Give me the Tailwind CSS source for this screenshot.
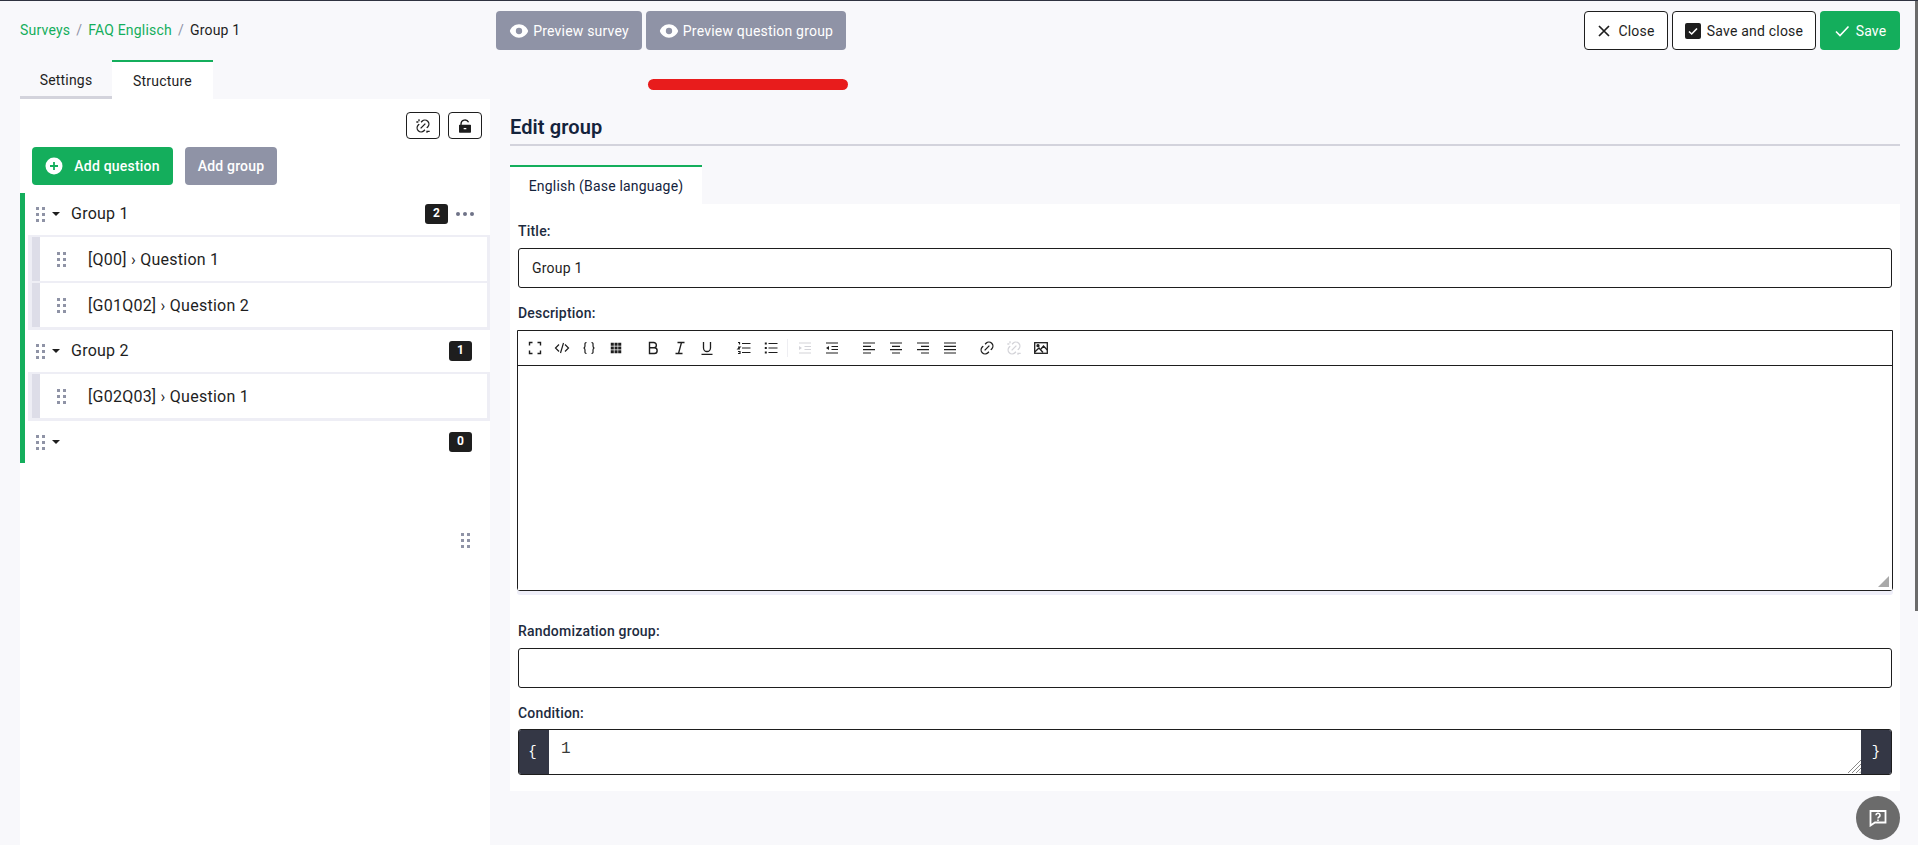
<!DOCTYPE html>
<html lang="en">
<head>
    <meta charset="UTF-8">
    <meta name="viewport" content="width=device-width, initial-scale=1.0">
    <title>Edit group</title>
    <script src="https://cdn.jsdelivr.net/npm/@tailwindcss/browser@4"></script>
</head>
<body class="bg-[#f8f8fb] text-[#1e1e1e] font-['Roboto',sans-serif] text-sm tracking-[0.2px]">
<div class="relative h-[845px] w-[1918px] overflow-hidden border-t border-[#2f3341]">

    <!-- top bar -->
    <header class="flex h-[59px] items-start pl-5 pr-[18px] pt-[10px]">
        <nav class="flex h-[38px] w-[476px] items-center gap-[6px]">
            <a class="text-[#14ae5c]">Surveys</a><span class="text-[#8f93a6]">/</span>
            <a class="text-[#14ae5c]">FAQ Englisch</a><span class="text-[#8f93a6]">/</span>
            <span>Group 1</span>
        </nav>
        <div class="flex gap-1">
            <button class="flex h-[39px] w-[146px] items-center justify-center gap-1 rounded bg-[#8f93a6] text-white">
                <svg class="h-5 w-5" viewBox="0 0 24 24" fill="#fff"><path fill-rule="evenodd" d="M12 4c5 0 9.400 3.400 11 8-1.600 4.600-6 8-11 8s-9.400-3.400-11-8c1.600-4.600 6-8 11-8zm0 4.200a3.800 3.800 0 1 0 0 7.600 3.800 3.800 0 0 0 0-7.600z"/></svg>
                Preview survey
            </button>
            <button class="flex h-[39px] w-[200px] items-center justify-center gap-1 rounded bg-[#8f93a6] text-white">
                <svg class="h-5 w-5" viewBox="0 0 24 24" fill="#fff"><path fill-rule="evenodd" d="M12 4c5 0 9.400 3.400 11 8-1.600 4.600-6 8-11 8s-9.400-3.400-11-8c1.600-4.600 6-8 11-8zm0 4.200a3.800 3.800 0 1 0 0 7.600 3.800 3.800 0 0 0 0-7.600z"/></svg>
                Preview question group
            </button>
        </div>
        <div class="ml-auto flex gap-1">
            <button class="flex h-[39px] w-[84px] items-center justify-center gap-[7px] rounded border border-[#1e1e1e] bg-white">
                <svg class="h-[14px] w-[14px]" viewBox="0 0 14 14" fill="none" stroke="#1e1e1e" stroke-width="1.700"><path d="M2 2l10 10M12 2L2 12"/></svg>
                Close
            </button>
            <button class="flex h-[39px] w-[144px] items-center justify-center gap-[6px] rounded border border-[#1e1e1e] bg-white">
                <span class="flex h-4 w-4 items-center justify-center rounded-[2px] bg-[#1e1e1e]">
                    <svg class="h-3 w-3" viewBox="0 0 12 12" fill="none" stroke="#fff" stroke-width="1.600"><path d="M2 6.500l2.700 2.500L10 3.500"/></svg>
                </span>
                Save and close
            </button>
            <button class="flex h-[39px] w-20 items-center justify-center gap-[6px] rounded bg-[#14ae5c] text-white">
                <svg class="h-[14px] w-[16px]" viewBox="0 0 16 14" fill="none" stroke="#fff" stroke-width="1.600"><path d="M2 7.500l4 4L14.500 2.500"/></svg>
                Save
            </button>
        </div>
    </header>

    <div class="flex gap-5 pl-5">
        <!-- left: structure -->
        <aside class="w-[470px]">
            <div class="flex h-[39px]">
                <div class="flex h-[39px] w-[92px] items-center justify-center border-b-[3px] border-[#d3d3dc] pt-1">Settings</div>
                <div class="flex h-[39px] w-[101px] items-center justify-center border-t-2 border-[#14ae5c] bg-white">Structure</div>
            </div>
            <div class="h-[747px] bg-white">
                <div class="flex justify-end gap-2 pt-[13px] pr-2">
                    <button class="flex h-[27px] w-[34px] items-center justify-center rounded border border-[#1e1e1e]">
                        <svg class="h-4 w-4" viewBox="0 0 24 24" fill="#1e1e1e"><path d="M18.364 15.536l-1.414-1.415 1.414-1.414a5 5 0 1 0-7.071-7.071L9.878 7.050 8.464 5.636l1.414-1.414a7 7 0 0 1 9.900 9.899l-1.414 1.415zm-2.829 2.828l-1.414 1.414a7 7 0 0 1-9.899-9.899l1.414-1.414 1.414 1.414-1.414 1.414a5 5 0 0 0 7.071 7.071l1.414-1.414 1.414 1.414zM14.828 7.757l1.414 1.414-7.071 7.071-1.414-1.414 7.071-7.071zM5 2h2v3H5zM2 5h3v2H2zM19 19h3v2h-3zM17 19h2v3h-2z"/></svg>
                    </button>
                    <button class="flex h-[27px] w-[34px] items-center justify-center rounded border border-[#1e1e1e]">
                        <svg class="h-4 w-4" viewBox="0 0 24 24" fill="#1e1e1e"><path fill-rule="evenodd" d="M7 10h13a1 1 0 0 1 1 1v10a1 1 0 0 1-1 1H4a1 1 0 0 1-1-1V11a1 1 0 0 1 1-1h1V9a7 7 0 0 1 13.262-3.131l-1.789.895A5 5 0 0 0 7 9v1zm3 5v2h4v-2h-4z"/></svg>
                    </button>
                </div>
                <div class="flex gap-3 pl-3 pt-2">
                    <button class="flex h-[38px] w-[141px] items-center justify-center gap-[11px] rounded bg-[#14ae5c] font-medium text-white">
                        <svg class="h-[18px] w-[18px]" viewBox="0 0 18 18"><circle cx="9" cy="9" r="8.500" fill="#fff"/><path d="M9 5v8M5 9h8" stroke="#14ae5c" stroke-width="1.800"/></svg>
                        Add question
                    </button>
                    <button class="h-[38px] w-[92px] rounded bg-[#8f93a6] font-medium text-white">Add group</button>
                </div>

                <!-- tree -->
                <div class="mt-2 border-l-[5px] border-[#14ae5c] text-[16px] tracking-[0.25px]">
                    <div class="flex h-[42px] items-center">
                        <svg class="ml-[11px] h-[15px] w-[10px]" viewBox="0 0 10 15" fill="#8f93a6"><rect width="3" height="3" x="0" y="0"/><rect width="3" height="3" x="6" y="0"/><rect width="3" height="3" x="0" y="6"/><rect width="3" height="3" x="6" y="6"/><rect width="3" height="3" x="0" y="12"/><rect width="3" height="3" x="6" y="12"/></svg>
                        <span class="ml-[6px] h-0 w-0 border-x-4 border-t-4 border-x-transparent border-t-[#1e1e1e]"></span>
                        <span class="ml-[11px]">Group 1</span>
                        <span class="ml-auto flex h-5 w-[23px] items-center justify-center rounded-[3px] bg-[#1e1e1e] text-[12px] font-bold text-white">2</span>
                        <svg class="ml-2 mr-4 h-1 w-[18px]" viewBox="0 0 18 4" fill="#6f7388"><circle cx="2" cy="2" r="2"/><circle cx="9" cy="2" r="2"/><circle cx="16" cy="2" r="2"/></svg>
                    </div>
                    <div class="ml-[3px] flex flex-col gap-[2px] bg-[#eeeef5] pb-[3px] pl-1 pr-[3px] pt-[2px]">
                        <div class="flex h-11 items-center border-l-8 border-[#dddde8] bg-white">
                            <svg class="ml-[17px] h-[15px] w-[10px]" viewBox="0 0 10 15" fill="#8f93a6"><rect width="3" height="3" x="0" y="0"/><rect width="3" height="3" x="6" y="0"/><rect width="3" height="3" x="0" y="6"/><rect width="3" height="3" x="6" y="6"/><rect width="3" height="3" x="0" y="12"/><rect width="3" height="3" x="6" y="12"/></svg>
                            <span class="ml-[21px] pt-[2px]">[Q00] › Question 1</span>
                        </div>
                        <div class="flex h-11 items-center border-l-8 border-[#dddde8] bg-white">
                            <svg class="ml-[17px] h-[15px] w-[10px]" viewBox="0 0 10 15" fill="#8f93a6"><rect width="3" height="3" x="0" y="0"/><rect width="3" height="3" x="6" y="0"/><rect width="3" height="3" x="0" y="6"/><rect width="3" height="3" x="6" y="6"/><rect width="3" height="3" x="0" y="12"/><rect width="3" height="3" x="6" y="12"/></svg>
                            <span class="ml-[21px] pt-[2px]">[G01Q02] › Question 2</span>
                        </div>
                    </div>
                    <div class="flex h-[42px] items-center">
                        <svg class="ml-[11px] h-[15px] w-[10px]" viewBox="0 0 10 15" fill="#8f93a6"><rect width="3" height="3" x="0" y="0"/><rect width="3" height="3" x="6" y="0"/><rect width="3" height="3" x="0" y="6"/><rect width="3" height="3" x="6" y="6"/><rect width="3" height="3" x="0" y="12"/><rect width="3" height="3" x="6" y="12"/></svg>
                        <span class="ml-[6px] h-0 w-0 border-x-4 border-t-4 border-x-transparent border-t-[#1e1e1e]"></span>
                        <span class="ml-[11px]">Group 2</span>
                        <span class="ml-auto mr-[18px] flex h-5 w-[23px] items-center justify-center rounded-[3px] bg-[#1e1e1e] text-[12px] font-bold text-white">1</span>
                    </div>
                    <div class="ml-[3px] bg-[#eeeef5] pb-[3px] pl-1 pr-[3px] pt-[2px]">
                        <div class="flex h-11 items-center border-l-8 border-[#dddde8] bg-white">
                            <svg class="ml-[17px] h-[15px] w-[10px]" viewBox="0 0 10 15" fill="#8f93a6"><rect width="3" height="3" x="0" y="0"/><rect width="3" height="3" x="6" y="0"/><rect width="3" height="3" x="0" y="6"/><rect width="3" height="3" x="6" y="6"/><rect width="3" height="3" x="0" y="12"/><rect width="3" height="3" x="6" y="12"/></svg>
                            <span class="ml-[21px] pt-[2px]">[G02Q03] › Question 1</span>
                        </div>
                    </div>
                    <div class="flex h-[42px] items-center">
                        <svg class="ml-[11px] h-[15px] w-[10px]" viewBox="0 0 10 15" fill="#8f93a6"><rect width="3" height="3" x="0" y="0"/><rect width="3" height="3" x="6" y="0"/><rect width="3" height="3" x="0" y="6"/><rect width="3" height="3" x="6" y="6"/><rect width="3" height="3" x="0" y="12"/><rect width="3" height="3" x="6" y="12"/></svg>
                        <span class="ml-[6px] h-0 w-0 border-x-4 border-t-4 border-x-transparent border-t-[#1e1e1e]"></span>
                        <span class="ml-auto mr-[18px] flex h-5 w-[23px] items-center justify-center rounded-[3px] bg-[#1e1e1e] text-[12px] font-bold text-white">0</span>
                    </div>
                </div>
                <div class="flex justify-end pr-[19px] pt-[70px]">
                    <svg class="h-[15px] w-[10px]" viewBox="0 0 10 15" fill="#8f93a6"><rect width="3" height="3" x="0" y="0"/><rect width="3" height="3" x="6" y="0"/><rect width="3" height="3" x="0" y="6"/><rect width="3" height="3" x="6" y="6"/><rect width="3" height="3" x="0" y="12"/><rect width="3" height="3" x="6" y="12"/></svg>
                </div>
            </div>
        </aside>

        <!-- right: edit form -->
        <main class="w-[1390px]">
            <h1 class="mt-[54px] h-[32px] border-b-2 border-[#d3d3dc] text-[20px] font-semibold leading-[26px] tracking-[0.1px] text-[#14233c]">Edit group</h1>
            <div class="mt-[19px] flex h-[39px] w-48 items-center justify-center border-t-2 border-[#14ae5c] bg-white text-[#14233c]">English (Base language)</div>
            <form class="h-[587px] bg-white px-2">
                <label class="block pt-[18px] font-medium leading-[18px] text-[#1d2b40]">Title:</label>
                <input class="mt-[8px] block h-10 w-[1374px] rounded-[3px] border border-[#1e1e1e] px-[13px]" value="Group 1">

                <label class="block pt-4 font-medium leading-[18px] text-[#1d2b40]">Description:</label>
                <div class="relative mt-2 -ml-px h-[261px] w-[1376px] rounded-b-[3px] border border-[#1e1e1e] shadow-[0_4px_0_#eeeef8]">
                    <div class="flex h-[35px] items-center border-b border-[#1e1e1e] pl-[3px]">
                        <span class="flex w-[27px] justify-center"><svg class="h-4 w-4" viewBox="0 0 16 16" fill="none" stroke="#1e1e1e" stroke-width="1.400"><path d="M2.500 5.500v-3h3M10.500 2.500h3v3M13.500 10.500v3h-3M5.500 13.500h-3v-3"/></svg></span>
                        <span class="flex w-[27px] justify-center"><svg class="h-4 w-4" viewBox="0 0 16 16" fill="none" stroke="#1e1e1e" stroke-width="1.200"><path d="M5 4.500L1.500 8 5 11.500M11 4.500L14.500 8 11 11.500M9.500 3L6.500 13"/></svg></span>
                        <span class="flex w-[27px] justify-center"><svg class="h-4 w-4" viewBox="0 0 16 16" fill="none" stroke="#1e1e1e" stroke-width="1.200"><path d="M5.500 2.500c-2 0-1.500 1.500-1.500 3S3.500 8 2.500 8C3.500 8 4 9 4 10.500s-.5 3 1.500 3M10.500 2.500c2 0 1.500 1.500 1.500 3s.5 2.500 1.500 2.500c-1 0-1.500 1-1.500 2.500s.5 3-1.500 3"/></svg></span>
                        <span class="flex w-[27px] justify-center"><svg class="h-[14px] w-[14px]" viewBox="0 0 16 16" fill="#1e1e1e"><path d="M2 2h3.500v3.500H2zM6.300 2h3.500v3.500H6.300zM10.500 2H14v3.500h-3.500zM2 6.300h3.500v3.500H2zM6.300 6.300h3.500v3.500H6.300zM10.500 6.300H14v3.500h-3.500zM2 10.500h3.500V14H2zM6.300 10.500h3.500V14H6.300zM10.500 10.500H14V14h-3.500z"/></svg></span>

                        <span class="ml-[10px] flex w-[27px] justify-center"><svg class="h-4 w-4" viewBox="0 0 16 16" fill="none" stroke="#1e1e1e" stroke-width="1.400"><path d="M4.500 2.500h4.200a2.600 2.600 0 0 1 0 5.300H4.500zM4.500 7.800h4.800a2.800 2.800 0 0 1 0 5.700H4.500z"/></svg></span>
                        <span class="flex w-[27px] justify-center"><svg class="h-4 w-4" viewBox="0 0 16 16" fill="none" stroke="#1e1e1e" stroke-width="1.300"><path d="M5.500 2.500h7M3.500 13.500h7M9.500 2.500l-3 11"/></svg></span>
                        <span class="flex w-[27px] justify-center"><svg class="h-4 w-4" viewBox="0 0 16 16" fill="none" stroke="#1e1e1e" stroke-width="1.300"><path d="M4.500 2v6a3.500 3.500 0 0 0 7 0V2M2.500 14.300h11"/></svg></span>

                        <span class="ml-[10px] flex w-[27px] justify-center"><svg class="h-4 w-4" viewBox="0 0 16 16" fill="none" stroke="#1e1e1e" stroke-width="1.200"><path d="M6 3.500h8.500M6 8h8.500M6 12.500h8.500M2 2.500h1.500v2M2 7h2L2 9h2M2 11.500h2v2H2"/></svg></span>
                        <span class="flex w-[27px] justify-center"><svg class="h-4 w-4" viewBox="0 0 16 16" fill="none" stroke="#1e1e1e" stroke-width="1.200"><path d="M5.500 3.500h9M5.500 8h9M5.500 12.500h9"/><path d="M1.800 3.500h2M1.800 8h2M1.800 12.500h2" stroke-width="2"/></svg></span>

                        <span class="ml-[3px] h-[18px] w-px bg-[#eeeef2]"></span>
                        <span class="ml-[3px] flex w-[27px] justify-center"><svg class="h-4 w-4" viewBox="0 0 16 16" fill="none" stroke="#d3d3d8" stroke-width="1.200"><path d="M2 3h12M7.500 6.500H14M7.500 9.500H14M2 13h12"/><path d="M2 6l3 2-3 2z" fill="#d3d3d8" stroke="none"/></svg></span>
                        <span class="flex w-[27px] justify-center"><svg class="h-4 w-4" viewBox="0 0 16 16" fill="none" stroke="#1e1e1e" stroke-width="1.200"><path d="M2 3h12M7.500 6.500H14M7.500 9.500H14M2 13h12"/><path d="M5 6L2 8l3 2z" fill="#1e1e1e" stroke="none"/></svg></span>

                        <span class="ml-[10px] flex w-[27px] justify-center"><svg class="h-4 w-4" viewBox="0 0 16 16" fill="none" stroke="#1e1e1e" stroke-width="1.200"><path d="M2 3h12M2 6.300h8M2 9.700h12M2 13h8"/></svg></span>
                        <span class="flex w-[27px] justify-center"><svg class="h-4 w-4" viewBox="0 0 16 16" fill="none" stroke="#1e1e1e" stroke-width="1.200"><path d="M2 3h12M4 6.300h8M2 9.700h12M4 13h8"/></svg></span>
                        <span class="flex w-[27px] justify-center"><svg class="h-4 w-4" viewBox="0 0 16 16" fill="none" stroke="#1e1e1e" stroke-width="1.200"><path d="M2 3h12M6 6.300h8M2 9.700h12M6 13h8"/></svg></span>
                        <span class="flex w-[27px] justify-center"><svg class="h-4 w-4" viewBox="0 0 16 16" fill="none" stroke="#1e1e1e" stroke-width="1.200"><path d="M2 3h12M2 6.300h12M2 9.700h12M2 13h12"/></svg></span>

                        <span class="ml-[10px] flex w-[27px] justify-center"><svg class="h-4 w-4" viewBox="0 0 24 24" fill="#1e1e1e"><path d="M18.364 15.536l-1.414-1.415 1.414-1.414a5 5 0 1 0-7.071-7.071L9.878 7.050 8.464 5.636l1.414-1.414a7 7 0 0 1 9.900 9.899l-1.414 1.415zm-2.829 2.828l-1.414 1.414a7 7 0 0 1-9.899-9.899l1.414-1.414 1.414 1.414-1.414 1.414a5 5 0 0 0 7.071 7.071l1.414-1.414 1.414 1.414zM14.828 7.757l1.414 1.414-7.071 7.071-1.414-1.414 7.071-7.071z"/></svg></span>
                        <span class="flex w-[27px] justify-center"><svg class="h-4 w-4" viewBox="0 0 24 24" fill="#d3d3d8"><path d="M18.364 15.536l-1.414-1.415 1.414-1.414a5 5 0 1 0-7.071-7.071L9.878 7.050 8.464 5.636l1.414-1.414a7 7 0 0 1 9.900 9.899l-1.414 1.415zm-2.829 2.828l-1.414 1.414a7 7 0 0 1-9.899-9.899l1.414-1.414 1.414 1.414-1.414 1.414a5 5 0 0 0 7.071 7.071l1.414-1.414 1.414 1.414zM14.828 7.757l1.414 1.414-7.071 7.071-1.414-1.414 7.071-7.071zM5 2h2v3H5zM2 5h3v2H2zM19 19h3v2h-3zM17 19h2v3h-2z"/></svg></span>
                        <span class="flex w-[27px] justify-center"><svg class="h-4 w-4" viewBox="0 0 16 16" fill="none" stroke="#1e1e1e" stroke-width="1.300"><rect x="1.700" y="2.700" width="12.600" height="10.600"/><path d="M1.700 12l4.300-4 4 4.500M8 9l2.500-3 3.800 4"/><circle cx="5" cy="5.700" r="1" fill="#1e1e1e"/></svg></span>
                    </div>
                    <div class="h-[224px] bg-white"></div>
                    <svg class="absolute bottom-[3px] right-[3px] h-[11px] w-[11px]" viewBox="0 0 11 11" fill="#a9a9a9"><path d="M11 0v11H0z"/></svg>
                </div>

                <label class="mt-[31px] block font-medium leading-[18px] text-[#1d2b40]">Randomization group:</label>
                <input class="mt-2 block h-10 w-[1374px] rounded-[3px] border border-[#1e1e1e] px-[13px]">

                <label class="block pt-4 font-medium leading-[18px] text-[#1d2b40]">Condition:</label>
                <div class="relative mt-[7px] flex h-[46px] w-[1374px] overflow-hidden rounded-[3px] border border-[#1e1e1e]">
                    <span class="flex w-[30px] items-center justify-center bg-[#343745] pr-[3px] font-['Liberation_Mono',monospace] text-white">{</span>
                    <div class="flex-1 px-3 pt-[9px] font-['Liberation_Mono',monospace] text-[16px] leading-5 text-[#3a3a3a]">1</div>
                    <span class="flex w-[30px] items-center justify-center bg-[#343745] font-['Liberation_Mono',monospace] text-white">}</span>
                    <svg class="absolute bottom-px right-[30px] h-[14px] w-[14px]" viewBox="0 0 14 14" stroke="#8a8a8a" stroke-width="1"><path d="M1 14L14 1M5 14l9-9M9 14l5-5M12.500 14l1.500-1.500"/></svg>
                </div>
            </form>
        </main>
    </div>

    <!-- annotation and help button, over the page -->
    <div class="absolute left-[648px] top-[78px] h-[11px] w-[200px] rounded-full bg-[#e81c1c]"></div>
    <button class="absolute left-[1856px] top-[795px] flex h-11 w-11 items-center justify-center rounded-full bg-[#6b6b6b]">
        <svg class="h-[18px] w-[18px]" viewBox="0 0 18 18" fill="none"><path d="M1.500 2h15v11.500H6L1.500 16.500z" stroke="#fff" stroke-width="1.800"/><path d="M7 6.300a2 2 0 1 1 3 1.700c-.7.400-1 .8-1 1.500M9 10.500v1.500" stroke="#fff" stroke-width="1.600"/></svg>
    </button>
    <div class="absolute right-0 top-0 h-[610px] w-[3px] bg-[#6b6b6b]"></div>
</div>
</body>
</html>
